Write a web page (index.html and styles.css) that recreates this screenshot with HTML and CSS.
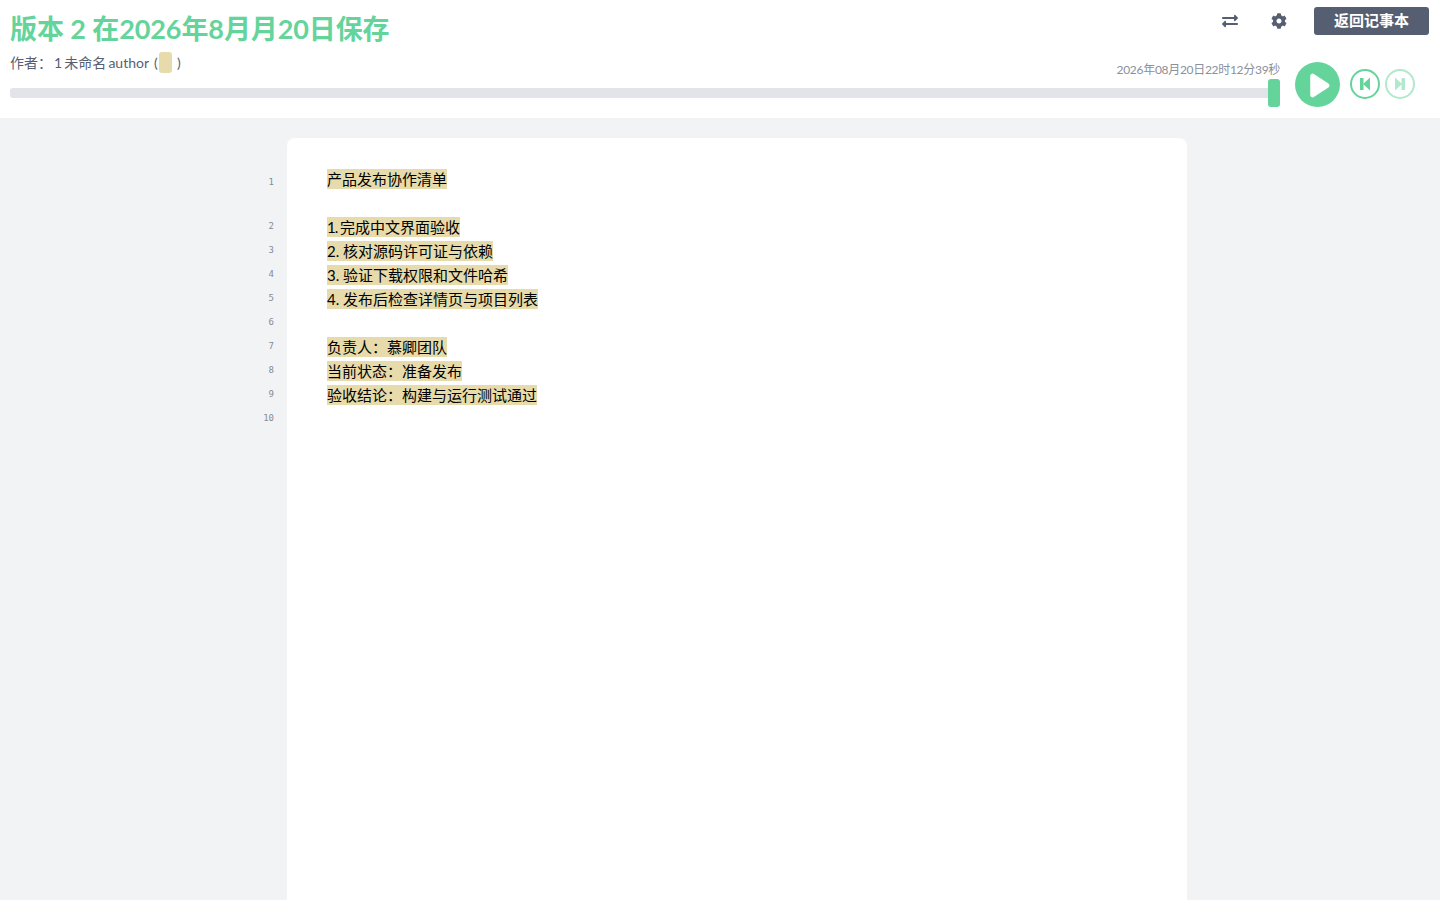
FILE: index.html
```html
<!DOCTYPE html>
<html lang="zh-CN">

<head>
    <meta charset="UTF-8">
    <title>版本 2 - 慕卿团队</title>
    <link rel="stylesheet" href="styles.css">
</head>

<body>
    <div class="timeslider">
        <div class="top-row">
            <h1 class="revision-title">版本 2 在2026年8月月20日保存</h1>
            <div class="tools">
                <button class="icon-btn" title="切换">
                    <svg class="icon" viewBox="0 0 512 512"><path d="M0 168v-16c0-13.255 10.745-24 24-24h360V80c0-21.367 25.899-32.042 40.971-16.971l80 80c9.372 9.373 9.372 24.569 0 33.941l-80 80C409.956 271.982 384 261.456 384 240v-48H24c-13.255 0-24-10.745-24-24zm488 152H128v-48c0-21.314-25.862-32.08-40.971-16.971l-80 80c-9.372 9.373-9.372 24.569 0 33.941l80 80C102.057 463.997 128 453.437 128 432v-48h360c13.255 0 24-10.745 24-24v-16c0-13.255-10.745-24-24-24z"/></svg>
                </button>
                <button class="icon-btn" title="设置">
                    <svg class="icon" viewBox="0 0 512 512"><path d="M487.4 315.7l-42.6-24.6c4.3-23.2 4.3-47 0-70.2l42.6-24.6c4.9-2.8 7.1-8.6 5.5-14-11.1-35.6-30-67.8-54.7-94.6-3.8-4.1-10-5.1-14.8-2.3L380.8 110c-17.9-15.4-38.5-27.3-60.8-35.1V25.8c0-5.6-3.9-10.5-9.4-11.7-36.7-8.2-74.3-7.8-109.2 0-5.5 1.2-9.4 6.1-9.4 11.7V75c-22.2 7.9-42.8 19.8-60.8 35.1L88.7 85.5c-4.9-2.8-11-1.9-14.8 2.3-24.7 26.7-43.6 58.9-54.7 94.6-1.7 5.4.6 11.2 5.5 14L67.3 221c-4.3 23.2-4.3 47 0 70.2l-42.6 24.6c-4.9 2.8-7.1 8.6-5.5 14 11.1 35.6 30 67.8 54.7 94.6 3.8 4.1 10 5.1 14.8 2.3l42.6-24.6c17.9 15.4 38.5 27.3 60.8 35.1v49.2c0 5.6 3.9 10.5 9.4 11.7 36.7 8.2 74.3 7.8 109.2 0 5.5-1.2 9.4-6.1 9.4-11.7v-49.2c22.2-7.9 42.8-19.8 60.8-35.1l42.6 24.6c4.9 2.8 11 1.9 14.8-2.3 24.7-26.7 43.6-58.9 54.7-94.6 1.5-5.5-.7-11.3-5.6-14.1zM256 336c-44.1 0-80-35.9-80-80s35.9-80 80-80 80 35.9 80 80-35.9 80-80 80z"/></svg>
                </button>
                <a class="back-btn" href="#">返回记事本</a>
            </div>
        </div>

        <div class="bottom-row">
            <div class="slider-col">
                <div class="meta-row">
                    <div class="authors">作者： 1 未命名 <span class="author-name">author</span> (<span class="author-swatch"></span> )</div>
                    <div class="timestamp">2026年08月20日22时12分39秒</div>
                </div>
                <div class="slider-bar">
                    <span class="slider-handle"></span>
                </div>
            </div>
            <div class="controls">
                <button class="play-btn">
                    <svg viewBox="0 0 45 45"><path d="M16 14v19c0 1.3 1.3 2 2.4 1.4l14.6-9.6c1-.6 1-2 0-2.7l-14.6-9.5c-1.1-.6-2.4.1-2.4 1.4z" fill="#fff" stroke="#fff" stroke-width="1.5" stroke-linejoin="round"/></svg>
                </button>
                <button class="step-btn">
                    <svg viewBox="0 0 30 30"><rect x="10" y="9" width="3.5" height="12"/><path d="M20 8.5v13L13 15z"/></svg>
                </button>
                <button class="step-btn disabled">
                    <svg viewBox="0 0 30 30"><rect x="16.5" y="9" width="3.5" height="12"/><path d="M10 8.5v13l7-6.5z"/></svg>
                </button>
            </div>
        </div>
    </div>

    <div class="editor-wrap">
        <div class="gutter">
            <div class="line-no first">1</div>
            <div class="line-no">2</div>
            <div class="line-no">3</div>
            <div class="line-no">4</div>
            <div class="line-no">5</div>
            <div class="line-no">6</div>
            <div class="line-no">7</div>
            <div class="line-no">8</div>
            <div class="line-no">9</div>
            <div class="line-no">10</div>
        </div>
        <div class="page">
            <div class="line title-line"><span class="mark">产品发布协作清单</span></div>
            <div class="line"><span class="mark"><span class="narrow">1. </span>完成中文界面验收</span></div>
            <div class="line"><span class="mark">2. 核对源码许可证与依赖</span></div>
            <div class="line"><span class="mark">3. 验证下载权限和文件哈希</span></div>
            <div class="line"><span class="mark">4. 发布后检查详情页与项目列表</span></div>
            <div class="line"></div>
            <div class="line"><span class="mark">负责人：慕卿团队</span></div>
            <div class="line"><span class="mark">当前状态：准备发布</span></div>
            <div class="line"><span class="mark">验收结论：构建与运行测试通过</span></div>
            <div class="line"></div>
        </div>
    </div>
</body>

</html>
```

FILE: styles.css
```css
* {
    margin: 0;
    padding: 0;
    box-sizing: border-box;
}

html,
body {
    height: 100%;
    overflow: hidden;
}

body {
    font-family: 'Lato', 'Noto Sans CJK SC', sans-serif;
    background-color: #f1f3f5;
    color: #565f72;
}

button {
    border: none;
    background: none;
    cursor: pointer;
}

.timeslider {
    height: 118px;
    background-color: #fff;
    padding: 0 11px 0 10px;
}

.top-row {
    display: flex;
    justify-content: space-between;
    height: 52px;
}

.revision-title {
    font-size: 27px;
    font-weight: 700;
    line-height: 38px;
    margin-top: 10px;
    letter-spacing: -0.1px;
    color: #64d49b;
}

.tools {
    display: flex;
    align-items: flex-start;
    padding-top: 7px;
}

.icon-btn {
    width: 16px;
    height: 28px;
    margin-right: 33px;
    display: flex;
    align-items: center;
}

.icon-btn:nth-child(2) {
    margin-right: 27px;
}

.icon {
    width: 16px;
    height: 16px;
    fill: #565f72;
}

.back-btn {
    width: 115px;
    height: 28px;
    line-height: 26px;
    text-align: center;
    border-radius: 3px;
    background-color: #565f72;
    color: #fff;
    font-size: 15px;
    font-weight: 700;
    text-decoration: none;
}

.bottom-row {
    display: flex;
    align-items: flex-start;
}

.slider-col {
    width: 1270px;
}

.meta-row {
    display: flex;
    justify-content: space-between;
    height: 36px;
}

.authors {
    font-size: 14px;
    line-height: 22px;
    word-spacing: -1.5px;
    white-space: pre;
}

.author-name {
    margin-right: 3px;
}

.author-swatch {
    display: inline-block;
    width: 13px;
    height: 21px;
    margin: -3px 3px 0 1px;
    vertical-align: middle;
    border-radius: 3px;
    background-color: #e7dbab;
}

.timestamp {
    font-size: 12px;
    line-height: 18px;
    margin-top: 9px;
    letter-spacing: -0.3px;
    color: #8a909c;
}

.slider-bar {
    position: relative;
    height: 10px;
    border-radius: 3px;
    background-color: #e3e4e9;
}

.slider-handle {
    position: absolute;
    right: 0;
    top: -9px;
    width: 12px;
    height: 28px;
    border-radius: 3px;
    background-color: #64d49b;
}

.controls {
    display: flex;
    align-items: flex-start;
    margin: 10px 0 0 15px;
}

.play-btn {
    width: 45px;
    height: 45px;
    margin-right: 10px;
    border-radius: 50%;
    background-color: #64d49b;
}

.play-btn svg,
.step-btn svg {
    display: block;
    width: 100%;
    height: 100%;
}

.step-btn {
    width: 30px;
    height: 30px;
    margin: 7px 5px 0 0;
    border: 2px solid #64d49b;
    border-radius: 50%;
    fill: #64d49b;
}

.step-btn svg {
    margin: -2px;
    width: 30px;
    height: 30px;
}

.step-btn.disabled {
    opacity: 0.5;
}

.editor-wrap {
    display: flex;
    justify-content: center;
    padding-top: 20px;
}

.gutter {
    width: 34px;
    padding: 34px 13px 0 0;
    font-family: 'DejaVu Sans Mono', monospace;
    font-size: 9px;
    text-align: right;
    color: #868b96;
}

.line-no {
    height: 24px;
    line-height: 24px;
}

.line-no.first {
    height: 42px;
    line-height: 20px;
}

.page {
    width: 900px;
    height: 800px;
    padding: 29px 40px 0;
    border-radius: 8px 8px 0 0;
    background-color: #fff;
    font-size: 15px;
    line-height: 24px;
    color: #000;
}

.line {
    height: 24px;
}

.title-line {
    margin-bottom: 24px;
}

.mark {
    padding: 1px 0;
    background-color: #e7dbab;
}

.narrow {
    letter-spacing: -1px;
}
```
